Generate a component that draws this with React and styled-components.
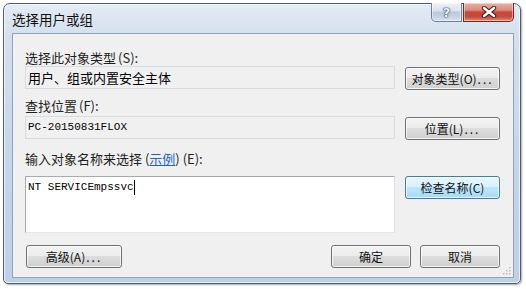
import React from "react";
import styled, { createGlobalStyle } from "styled-components";

const Global = createGlobalStyle`
  html, body { margin: 0; padding: 0; background: #ffffff; }
  body { font-family: "Noto Sans CJK SC", "Noto Sans", sans-serif; }
`;

const Page = styled.div`
  width: 526px;
  height: 289px;
  padding: 3px 0 0 3px;
  box-sizing: border-box;
`;

const Window = styled.div`
  width: 518px;
  height: 281px;
  box-sizing: border-box;
  border: 1px solid #4f5d70;
  border-radius: 7px 7px 5px 5px;
  background: linear-gradient(to bottom, #e4ebf4 0%, #d3dfed 12%, #c4d5e9 60%, #bcd0e7 100%);
  box-shadow: inset 0 0 0 1px rgba(255, 255, 255, 0.7), 1px 1px 2px rgba(0, 0, 0, 0.35);
  display: flex;
  flex-direction: column;
  padding: 0 6px 5px 8px;
`;

const TitleBar = styled.div`
  height: 29px;
  display: flex;
  align-items: flex-start;
  justify-content: space-between;
  flex: none;
`;

const Title = styled.div`
  font-size: 13.5px;
  line-height: 15px;
  color: #111;
  margin-top: 8px;
`;

const Controls = styled.div`
  display: flex;
  gap: 1px;
  margin-top: -1px;
`;

const CapButton = styled.div`
  width: ${(p) => p.$w}px;
  height: 19px;
  box-sizing: border-box;
  border: 1px solid ${(p) => (p.$close ? "#6e2d24" : "#6f7f94")};
  border-top: none;
  border-radius: ${(p) => (p.$close ? "0 0 5px 0" : "0 0 0 5px")};
  background: ${(p) =>
    p.$close
      ? "linear-gradient(to bottom, #eab0a3 0%, #d98a7c 40%, #c7493a 50%, #c64a37 75%, #e08a72 100%)"
      : "linear-gradient(to bottom, #eef2f8 0%, #d8e1ec 45%, #b9c8da 50%, #c6d4e4 80%, #dbe4ef 100%)"};
  box-shadow: inset 0 0 0 1px rgba(255, 255, 255, 0.45);
  display: flex;
  align-items: center;
  justify-content: center;
`;

const HelpGlyph = styled.span`
  font-family: "DejaVu Sans", sans-serif;
  font-weight: bold;
  font-size: 13px;
  line-height: 13px;
  color: #eef3f9;
  text-shadow: 0 0 1px #2a3f5c, 0 0 1px #2a3f5c, 0 0 2px #4a5f7c;
`;

const Client = styled.div`
  flex: 1;
  background: #f0f0f0;
  border: 1px solid #8fa3bd;
  display: flex;
  flex-direction: column;
  padding: 16px 13px 0 12px;
  position: relative;
`;

const Label = styled.div`
  font-size: 13px;
  line-height: 16px;
  height: 16px;
  color: #1e1e1e;
  margin-top: ${(p) => p.$mt || 0}px;
  white-space: nowrap;
`;

const Paren = styled.span`
  margin-left: 2px;
`;

const Link = styled.span`
  color: #1a66c8;
  text-decoration: underline;
`;

const Row = styled.div`
  display: flex;
  gap: 10px;
  align-items: flex-start;
  margin-top: ${(p) => p.$mt || 0}px;
`;

const Field = styled.div`
  width: 371px;
  height: ${(p) => (p.$tall ? 57 : 23)}px;
  box-sizing: border-box;
  border: 1px solid ${(p) => (p.$edit ? "#a6abb3" : "#d8dce1")};
  ${(p) => (p.$edit ? "border-right-color: #d9dfe6; border-bottom-color: #e3e7ec;" : "")}
  background: ${(p) => (p.$edit ? "#ffffff" : "#f0f0f0")};
  padding: ${(p) => (p.$edit ? "3px 2px" : "3px 2px")};
  display: flex;
  align-items: ${(p) => (p.$edit ? "flex-start" : "center")};
  font-family: ${(p) =>
    p.$mono ? '"Liberation Mono", "DejaVu Sans Mono", monospace' : '"Noto Sans CJK SC", sans-serif'};
  font-size: ${(p) => (p.$mono ? 11 : 13)}px;
  line-height: 15px;
  color: #000;
  white-space: nowrap;
`;

const Caret = styled.span`
  display: inline-block;
  width: 1px;
  height: 15px;
  background: #000;
  vertical-align: top;
`;

const Button = styled.div`
  width: ${(p) => p.$w || 95}px;
  height: 23px;
  box-sizing: border-box;
  margin-top: ${(p) => p.$mt || 0}px;
  border: 1px solid ${(p) => (p.$default ? "#3c7fb1" : "#707070")};
  border-radius: 3px;
  background: ${(p) =>
    p.$default
      ? "linear-gradient(to bottom, #eaf6fd 0%, #d9f0fc 49%, #bee6fd 50%, #a7d9f5 100%)"
      : "linear-gradient(to bottom, #f2f2f2 0%, #ebebeb 49%, #dddddd 50%, #cfcfcf 100%)"};
  box-shadow: inset 0 0 0 1px rgba(255, 255, 255, 0.75);
  display: flex;
  align-items: center;
  justify-content: center;
  font-size: 12px;
  line-height: 14px;
  color: #111;
  white-space: nowrap;
`;

const Dots = styled.span`
  letter-spacing: 2px;
  margin-left: 1px;
`;

const Column = styled.div`
  display: flex;
  flex-direction: column;
`;

const Footer = styled.div`
  display: flex;
  align-items: center;
  margin-top: 12px;
  padding-left: 1px;
`;

const Spacer = styled.div`
  flex: 1;
`;

const FooterButtons = styled.div`
  display: flex;
  gap: 9px;
`;

const Grip = styled.svg`
  position: absolute;
  right: 2px;
  bottom: 2px;
`;

function CloseX() {
  return (
    <svg width="16" height="12" viewBox="0 0 16 12">
      <path d="M3 2 L13 10 M13 2 L3 10" stroke="#3a120c" strokeWidth="4.4" strokeLinecap="round" />
      <path d="M3 2 L13 10 M13 2 L3 10" stroke="#ffffff" strokeWidth="2.6" strokeLinecap="round" />
    </svg>
  );
}

export default function App() {
  return (
    <>
      <Global />
      <Page>
        <Window>
          <TitleBar>
            <Title>选择用户或组</Title>
            <Controls>
              <CapButton $w={31}>
                <HelpGlyph>?</HelpGlyph>
              </CapButton>
              <CapButton $w={51} $close>
                <CloseX />
              </CapButton>
            </Controls>
          </TitleBar>
          <Client>
            <Label>
              选择此对象类型<Paren>(S):</Paren>
            </Label>
            <Row>
              <Field>用户、组或内置安全主体</Field>
              <Button $mt={1}>
                对象类型(O)<Dots>...</Dots>
              </Button>
            </Row>

            <Label $mt={8}>
              查找位置<Paren>(F):</Paren>
            </Label>
            <Row $mt={2}>
              <Field $mono>PC-20150831FLOX</Field>
              <Button $mt={1}>
                位置(L)<Dots>...</Dots>
              </Button>
            </Row>

            <Label $mt={11}>
              输入对象名称来选择 (<Link>示例</Link>) (E):
            </Label>
            <Row $mt={9}>
              <Field $mono $edit $tall>
                NT SERVICEmpssvc<Caret />
              </Field>
              <Column>
                <Button $default>检查名称(C)</Button>
              </Column>
            </Row>

            <Footer>
              <Button $w={96}>
                高级(A)<Dots>...</Dots>
              </Button>
              <Spacer />
              <FooterButtons>
                <Button $w={80}>确定</Button>
                <Button $w={80}>取消</Button>
              </FooterButtons>
            </Footer>
            <Grip width="9" height="9" viewBox="0 0 9 9">
              {[
                [7, 1],
                [7, 4],
                [4, 4],
                [7, 7],
                [4, 7],
                [1, 7],
              ].map(([x, y]) => (
                <rect key={`${x}-${y}`} x={x} y={y} width="1.5" height="1.5" fill="#b8bcc2" />
              ))}
            </Grip>
          </Client>
        </Window>
      </Page>
    </>
  );
}
